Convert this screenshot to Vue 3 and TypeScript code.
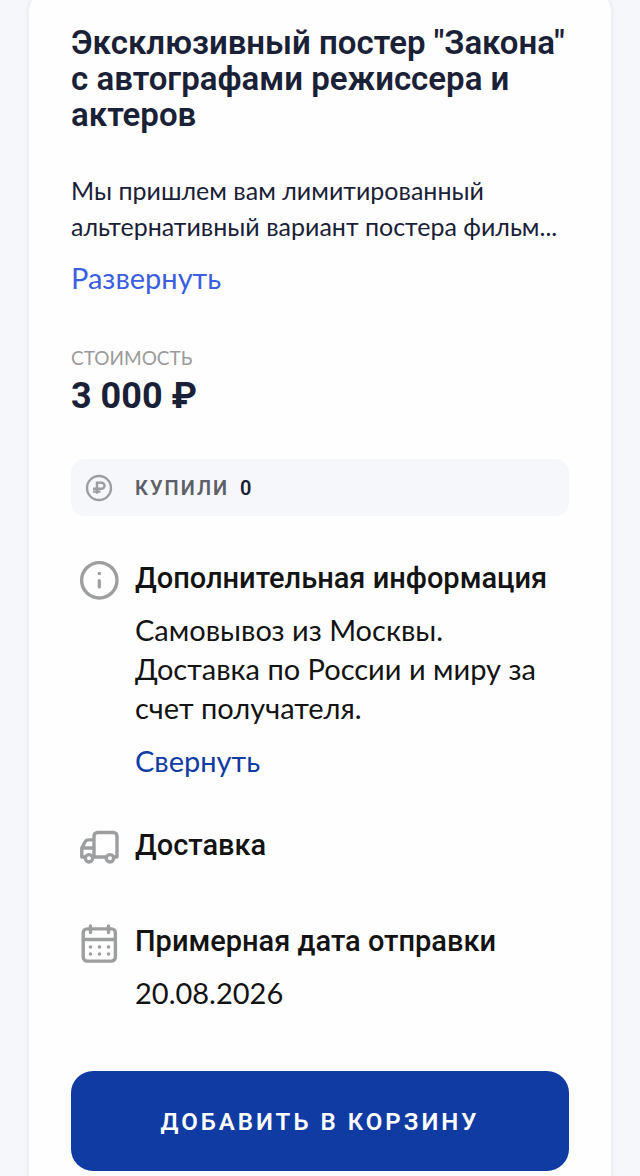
<script setup lang="ts">
import { ref } from 'vue'

const descriptionOpen = ref(false)
const infoOpen = ref(true)
const inCart = ref(false)
</script>

<template>
  <main class="page">
    <article class="card">
      <h1 class="title">Эксклюзивный постер "Закона" с автографами режиссера и актеров</h1>

      <p class="description">
        Мы пришлем вам лимитированный альтернативный вариант постера фильм...
      </p>
      <button class="toggle light" type="button" :aria-expanded="descriptionOpen" @click="descriptionOpen = !descriptionOpen">
        {{ descriptionOpen ? 'Свернуть' : 'Развернуть' }}
      </button>

      <div class="cost">
        <span class="cost-label">СТОИМОСТЬ</span>
        <strong class="cost-value">3 000 ₽</strong>
      </div>

      <div class="bought">
        <svg class="coin" viewBox="0 0 28 28" fill="none" stroke="currentColor" stroke-width="2.4" aria-hidden="true">
          <circle cx="14" cy="14" r="12" />
          <path d="M12 19.800V8.700H16.500A3 3 0 0 1 16.500 14.700H8M8 17.600H15.500" />
        </svg>
        <span class="bought-label">КУПИЛИ</span>
        <span class="bought-count">0</span>
      </div>

      <section class="row">
        <svg class="icon" viewBox="0 0 40 40" fill="none" stroke="currentColor" stroke-width="3.400" stroke-linecap="round" aria-hidden="true">
          <circle cx="20.300" cy="20.300" r="17.700" />
          <path d="M20.300 20.500V27" stroke-width="3.200" />
          <circle cx="20.300" cy="13.500" r="1.800" fill="currentColor" stroke="none" />
        </svg>
        <div class="row-body">
          <h2 class="row-title">Дополнительная информация</h2>
          <p v-if="infoOpen" class="row-text">Самовывоз из Москвы.<br />Доставка по России и миру за счет получателя.</p>
          <button class="toggle dark" type="button" :aria-expanded="infoOpen" @click="infoOpen = !infoOpen">
            {{ infoOpen ? 'Свернуть' : 'Развернуть' }}
          </button>
        </div>
      </section>

      <section class="row">
        <svg class="icon" viewBox="0 0 40 40" fill="none" stroke="currentColor" stroke-width="3.400" stroke-linejoin="round" stroke-linecap="round" aria-hidden="true">
          <path d="M15 30V9a3.500 3.500 0 0 1 3.500-3.500H34.500A3.500 3.500 0 0 1 38 9V30H35.500M26 30H14M5 30H2.800V21L6 15A4 4 0 0 1 9.500 12.900H15M3 21H15" />
          <circle cx="10" cy="31.300" r="3.700" />
          <circle cx="31" cy="31.300" r="3.700" />
        </svg>
        <div class="row-body">
          <h2 class="row-title">Доставка</h2>
        </div>
      </section>

      <section class="row">
        <svg class="icon" viewBox="0 0 40 40" fill="none" stroke="currentColor" stroke-width="3.400" stroke-linecap="round" aria-hidden="true">
          <rect x="4.200" y="5.900" width="32.200" height="32.200" rx="4" />
          <path d="M4.500 16.500H36M11.500 3V9.500M29.500 3V9.500" />
          <g fill="currentColor" stroke="none">
            <circle v-for="n in 6" :key="n" :cx="11.500 + ((n - 1) % 3) * 9" :cy="n > 3 ? 31 : 24" r="1.800" />
          </g>
        </svg>
        <div class="row-body">
          <h2 class="row-title">Примерная дата отправки</h2>
          <p class="row-text">20.08.2026</p>
        </div>
      </section>

      <button class="buy" type="button" :aria-pressed="inCart" @click="inCart = !inCart">ДОБАВИТЬ В КОРЗИНУ</button>
    </article>
  </main>
</template>

<style>
body {
  margin: 0;
  background: #f5f7fb;
}
</style>

<style scoped>
.page {
  padding: 0 28px;
  overflow: hidden;
  font-family: Lato, "Noto Sans", sans-serif;
  color: #1a2137;
}

.card {
  display: flex;
  flex-direction: column;
  align-items: stretch;
  margin-top: -12px;
  padding: 36px 42px 5px;
  border: 1px solid #eceef1;
  border-bottom: 0;
  border-radius: 24px 24px 0 0;
  background: #fefefe;
  box-shadow: 0 0 4px rgba(30, 40, 60, 0.08);
}

h1,
h2,
p {
  margin: 0;
}

button {
  padding: 0;
  border: 0;
  background: none;
  font: inherit;
  cursor: pointer;
}

.title {
  font: 600 33px/36px Roboto, sans-serif;
}

.description {
  margin-top: 39px;
  font-size: 25px;
  line-height: 36px;
}

.toggle {
  align-self: flex-start;
  font-size: 29px;
  line-height: 40px;
}

.light {
  margin-top: 14px;
  color: #3c5fe0;
}

.dark {
  margin-top: 14px;
  color: #103ba3;
}

.cost {
  display: flex;
  flex-direction: column;
  gap: 2px;
  margin-top: 46px;
}

.cost-label {
  font-size: 19px;
  line-height: 28px;
  color: #9b9b9b;
}

.cost-value {
  font: 700 36px/44px Roboto, sans-serif;
}

.bought {
  display: flex;
  align-items: center;
  height: 57px;
  margin-top: 41px;
  padding: 0 14px;
  border-radius: 14px;
  background: #f5f7fb;
  font: 600 20px/28px Roboto, sans-serif;
}

.coin {
  width: 28px;
  height: 28px;
  margin-right: 22px;
  color: #9d9ea0;
}

.bought-label {
  letter-spacing: 2px;
  color: #5d6067;
}

.bought-count {
  margin-left: 11px;
}

.row {
  display: flex;
  gap: 16px;
  min-height: 52px;
  margin-top: 44px;
  padding-left: 8px;
  color: #131313;
}

.bought + .row {
  margin-top: 42px;
}

.icon {
  flex: none;
  width: 40px;
  height: 40px;
  margin-top: 2px;
  color: #9d9ea0;
}

.row-body {
  flex: 1;
}

.row-title {
  font: 500 29px/40px Roboto, sans-serif;
}

.row-text {
  margin-top: 12px;
  font-size: 29px;
  line-height: 39px;
}

.buy {
  height: 100px;
  margin-top: 59px;
  padding-top: 2px;
  border-radius: 22px;
  background: #103ba3;
  color: #fff;
  font: 600 24px/32px Roboto, sans-serif;
  letter-spacing: 3px;
}
</style>
